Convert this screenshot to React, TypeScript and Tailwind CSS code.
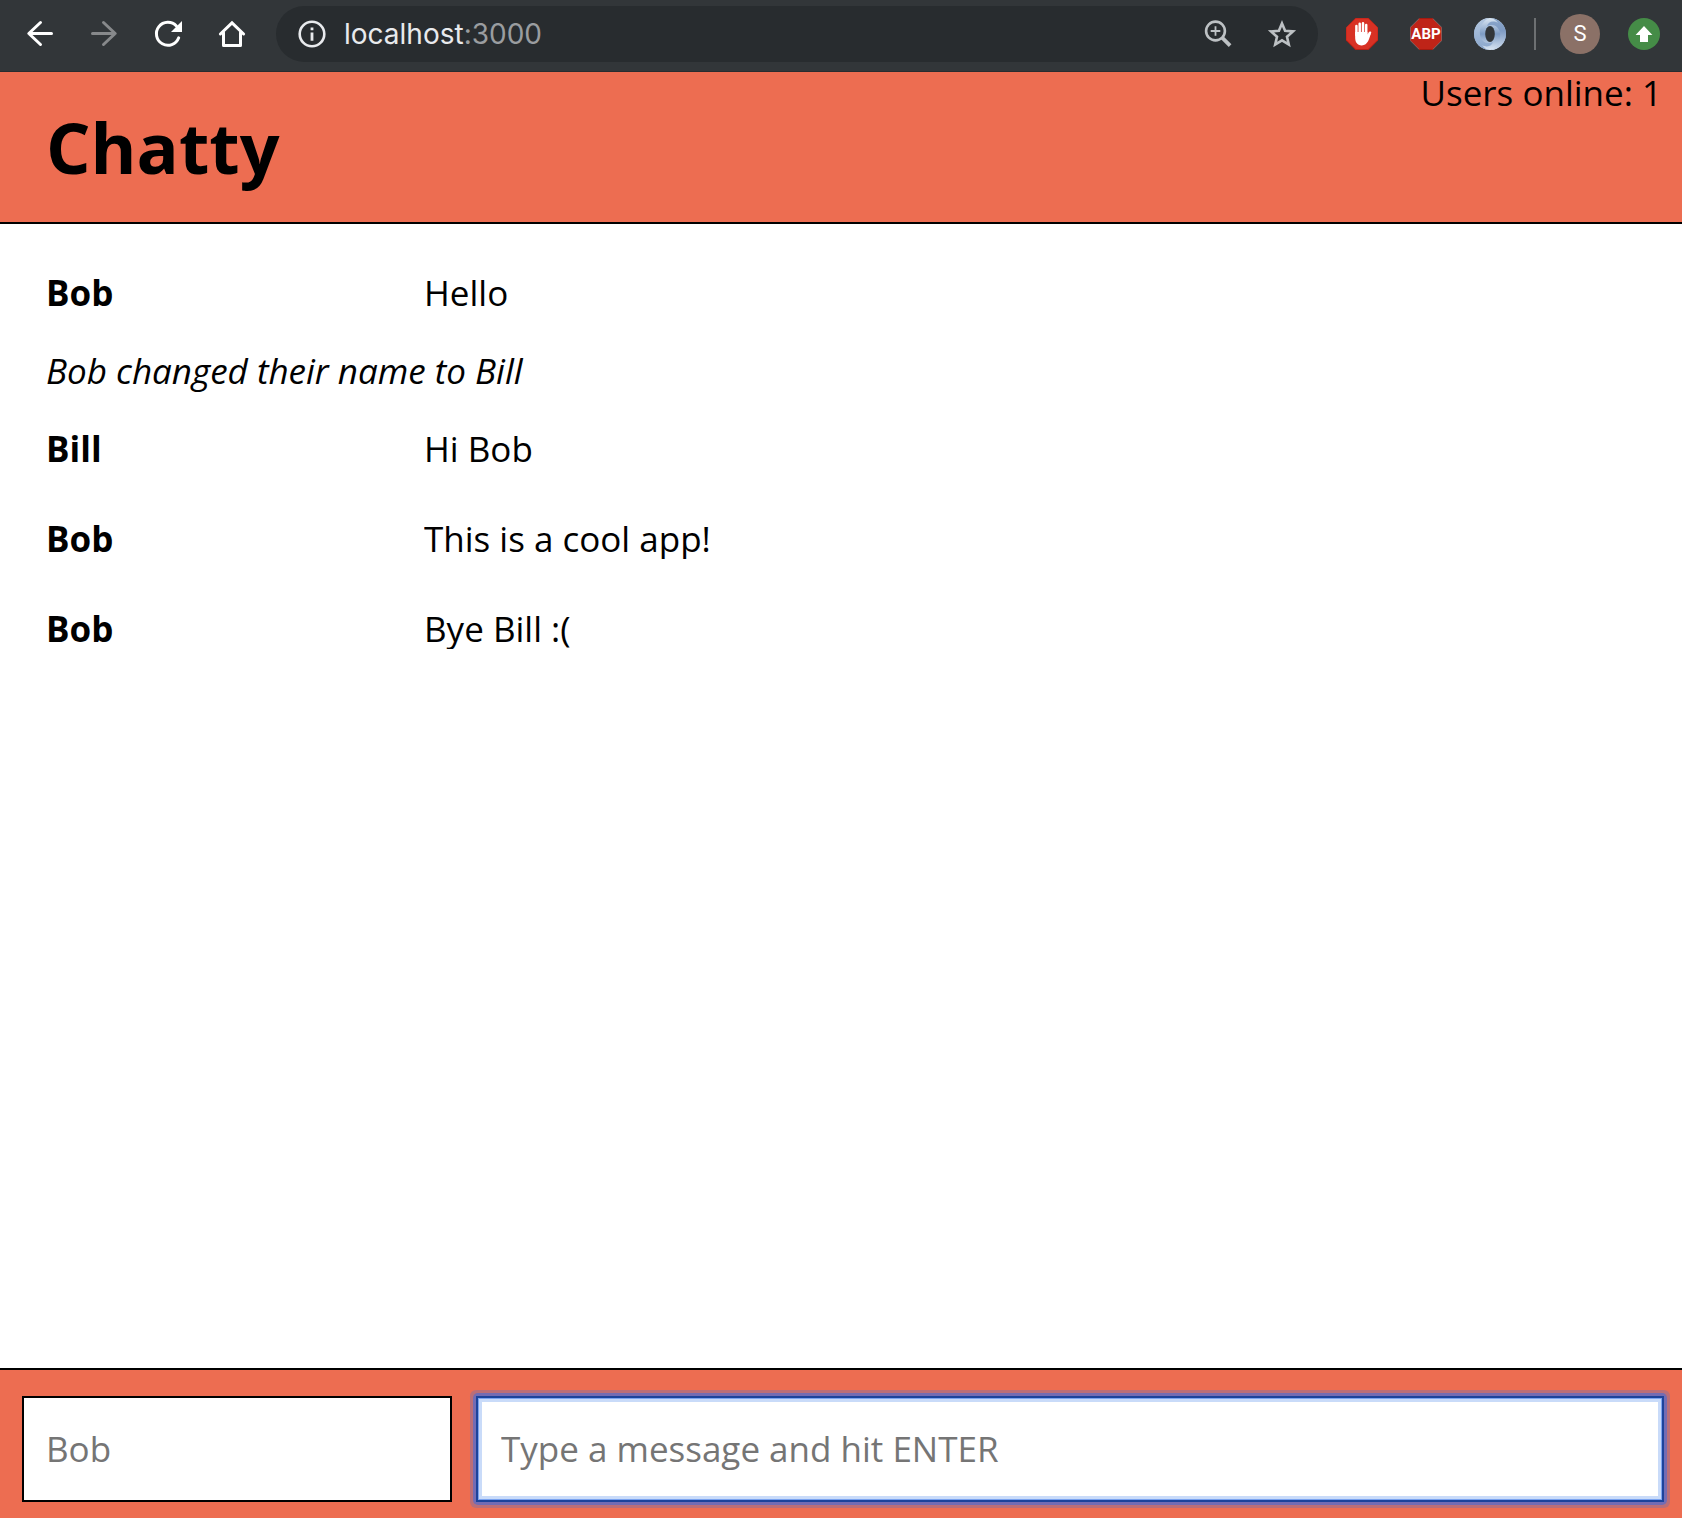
import React from "react";

type Entry =
  | { kind: "message"; user: string; text: string }
  | { kind: "notice"; text: string };

const entries: Entry[] = [
  { kind: "message", user: "Bob", text: "Hello" },
  { kind: "notice", text: "Bob changed their name to Bill" },
  { kind: "message", user: "Bill", text: "Hi Bob" },
  { kind: "message", user: "Bob", text: "This is a cool app!" },
  { kind: "message", user: "Bob", text: "Bye Bill :(" },
];

function BackIcon({ className }: { className: string }) {
  return (
    <svg viewBox="0 0 32 32" className={className} fill="none" stroke="currentColor" strokeWidth="3" strokeLinecap="round" strokeLinejoin="round" aria-hidden="true">
      <path d="M27.5 15.5H5M16.5 4.5L4.8 15.5L16.5 26.5" />
    </svg>
  );
}

function ForwardIcon({ className }: { className: string }) {
  return (
    <svg viewBox="0 0 32 32" className={className} fill="none" stroke="currentColor" strokeWidth="3" strokeLinecap="round" strokeLinejoin="round" aria-hidden="true">
      <path d="M4.5 15.5H27M15.5 4.5L27.2 15.5L15.5 26.5" />
    </svg>
  );
}

function ReloadIcon() {
  return (
    <svg viewBox="0 0 32 32" className="size-8 text-white" aria-hidden="true">
      <path d="M26.7 19.8A11.5 11.5 0 1 1 24.4 8" fill="none" stroke="currentColor" strokeWidth="3" strokeLinecap="round" />
      <path d="M30 3V14H19Z" fill="currentColor" />
    </svg>
  );
}

function HomeIcon() {
  return (
    <svg viewBox="0 0 32 32" className="size-8 text-white" fill="none" stroke="currentColor" strokeWidth="3" strokeLinecap="round" aria-hidden="true">
      <path d="M4.4 16L16 4.8L27.6 16" />
      <path d="M7.5 14.5V27.4H24.5V14.5" strokeLinejoin="round" />
    </svg>
  );
}

function InfoIcon() {
  return (
    <svg viewBox="0 0 28 28" className="size-7 text-[#e8eaed]" aria-hidden="true">
      <circle cx="14" cy="14" r="12.3" fill="none" stroke="currentColor" strokeWidth="2.6" />
      <path d="M12.6 7.5h2.8v2.8h-2.8zM12.6 12.4h2.8v8.4h-2.8z" fill="currentColor" />
    </svg>
  );
}

function ZoomIcon() {
  return (
    <svg viewBox="0 0 32 32" className="size-8 text-[#bdc1c4]" fill="none" stroke="currentColor" aria-hidden="true">
      <circle cx="13.5" cy="13" r="9.4" strokeWidth="2.6" />
      <path d="M13.5 8.2v9.6M8.7 13h9.6" strokeWidth="1.8" />
      <path d="M20.1 19.6l8 8" strokeWidth="3.8" />
    </svg>
  );
}

function StarIcon() {
  return (
    <svg viewBox="0 0 32 32" className="size-8 text-[#bdc1c4]" fill="none" stroke="currentColor" strokeWidth="2.6" aria-hidden="true">
      <path d="M16 5.4L19.1 12.8L27 13.4L21 18.7L22.8 26.6L16 22.4L9.2 26.6L11 18.7L5 13.4L12.9 12.8Z" />
    </svg>
  );
}

function HandStopIcon() {
  return (
    <svg viewBox="0 0 32 32" className="size-8" aria-hidden="true">
      <path d="M9.4 0H22.6L32 9.4V22.6L22.6 32H9.4L0 22.6V9.4Z" fill="#b81f14" />
      <path d="M9.8 .4H22.2L31.6 9.6V21.8L22.2 31H9.8L.4 21.8V9.6Z" fill="#d83124" />
      <g stroke="#fff" strokeWidth="2.5" strokeLinecap="round" fill="none">
        <path d="M10.4 8V17M13.7 5.7V16M17 5.2V16M20.2 7V17M24 14.7L21 20" />
      </g>
      <path d="M9.15 14H21.4V18L24.8 15.6C23.4 20.4 22 27.4 15.8 27.4C11 27.4 9.15 23.6 9.15 19.4Z" fill="#fff" />
    </svg>
  );
}

function AbpIcon() {
  return (
    <span className="relative grid size-8 place-items-center">
      <svg viewBox="0 0 32 32" className="absolute inset-0 size-8" aria-hidden="true">
        <path d="M9.4 .3H22.6L31.7 9.4V22.6L22.6 31.7H9.4L.3 22.6V9.4Z" fill="#bf2418" stroke="#8c8c8c" strokeWidth=".6" />
        <path d="M9.6 0H22.4L23.4 1H8.6ZM9.6 32H22.4L23.4 31H8.6Z" fill="#a31a10" />
      </svg>
      <span className="relative font-[Roboto,sans-serif] text-[15px] leading-4 font-bold text-white">ABP</span>
    </span>
  );
}

function RingIcon() {
  return (
    <svg viewBox="0 0 32 32" className="size-8" aria-hidden="true">
      <defs>
        <linearGradient id="ringBase" x1="0" y1="0" x2="0" y2="1">
          <stop offset="0" stopColor="#dbe7f3" />
          <stop offset=".5" stopColor="#7d9bc3" />
          <stop offset="1" stopColor="#dce8f4" />
        </linearGradient>
        <linearGradient id="ringRight" x1="0" y1="0" x2="0" y2="1">
          <stop offset="0" stopColor="#8ba7cb" />
          <stop offset=".4" stopColor="#7f9bc3" />
          <stop offset="1" stopColor="#cfdeee" />
        </linearGradient>
        <linearGradient id="ringLeft" x1="0" y1="0" x2="0" y2="1">
          <stop offset="0" stopColor="#b4c8e0" />
          <stop offset=".6" stopColor="#9bb4d4" />
          <stop offset="1" stopColor="#8ba7cc" />
        </linearGradient>
      </defs>
      <circle cx="16" cy="16" r="16" fill="url(#ringBase)" />
      <path d="M16 0C25 0 32 7 32 16C32 25 25 32 17 32C24 28 27 22 26 15C25 9 20 5 13 8C14 4 19 2 24 5C22 2 19 0 16 0Z" fill="url(#ringRight)" />
      <path d="M16 32C7 32 0 25 0 16C0 7 7 0 15 0C8 4 5 10 6 17C7 23 12 27 19 24C18 28 13 30 8 27C10 30 13 32 16 32Z" fill="url(#ringLeft)" />
      <ellipse cx="16" cy="16" rx="4.8" ry="8" fill="#323639" />
    </svg>
  );
}

function UpdateIcon() {
  return (
    <svg viewBox="0 0 32 32" className="size-8" aria-hidden="true">
      <circle cx="16" cy="16" r="16" fill="#458c47" />
      <path d="M16 8L24.4 17H20V24H12V17H7.6Z" fill="#fff" />
    </svg>
  );
}

function BrowserBar() {
  return (
    <div className="flex h-[72px] items-center border-b border-[#292c2f] bg-[#323639] pt-px pr-[22px] pb-1 pl-6">
      <nav aria-label="Browser" className="flex gap-8">
        <button type="button" aria-label="Back"><BackIcon className="size-8 text-white" /></button>
        <button type="button" aria-label="Forward"><ForwardIcon className="size-8 text-[#87898b]" /></button>
        <button type="button" aria-label="Reload"><ReloadIcon /></button>
        <button type="button" aria-label="Home"><HomeIcon /></button>
      </nav>
      <div className="ml-7 flex h-14 flex-1 items-center rounded-full bg-[#282c2f] pr-5 pl-[22px]">
        <button type="button" aria-label="Site information"><InfoIcon /></button>
        <a href="#" className="ml-[18px] flex-1 font-[Inter,sans-serif] text-[28px] leading-9 text-[#e8eaed]">
          localhost<span className="text-[#9a9da0]">:3000</span>
        </a>
        <div className="flex gap-8">
          <button type="button" aria-label="Zoom"><ZoomIcon /></button>
          <button type="button" aria-label="Bookmark"><StarIcon /></button>
        </div>
      </div>
      <div className="ml-7 flex items-center">
        <div className="flex gap-8">
          <button type="button" aria-label="AdBlock"><HandStopIcon /></button>
          <button type="button" aria-label="Adblock Plus"><AbpIcon /></button>
          <button type="button" aria-label="JSON viewer"><RingIcon /></button>
        </div>
        <span className="ml-7 h-8 w-0.5 bg-[#6d7072]" />
        <button type="button" aria-label="Profile" className="ml-6 grid size-10 place-items-center rounded-full bg-[#8b7167] font-[Roboto,sans-serif] text-[22px] text-white">
          S
        </button>
        <button type="button" aria-label="Update" className="ml-7"><UpdateIcon /></button>
      </div>
    </div>
  );
}

export default function App() {
  return (
    <div className="flex min-h-screen flex-col bg-white font-['Open_Sans',sans-serif] text-[35px] leading-10 text-black">
      <BrowserBar />
      <header className="flex items-start justify-between border-b-2 border-black bg-[#ed6d51] pr-5 pl-[46px]">
        <h1 className="py-[35px] text-[70px] leading-[80px] font-bold">Chatty</h1>
        <p className="pt-px">Users online: 1</p>
      </header>
      <main className="flex flex-1 flex-col gap-[50px] px-[46px] pt-[49px]">
        {entries.map((entry, i) =>
          entry.kind === "message" ? (
            <div key={i} className="grid grid-cols-[378px_1fr]">
              <span className="font-bold">{entry.user}</span>
              <span className="overflow-hidden">{entry.text}</span>
            </div>
          ) : (
            <p key={i} className="-my-3 italic">{entry.text}</p>
          )
        )}
      </main>
      <footer className="flex gap-6 border-t-2 border-black bg-[#ed6d51] pt-[26px] pr-[18px] pb-4 pl-[22px]">
        <input
          aria-label="Your name"
          placeholder="Bob"
          className="h-[106px] w-[430px] border-2 border-black bg-white px-[22px] pb-0.5 outline-none placeholder:text-[#757575]"
        />
        <div className="flex-1 rounded-[2px] shadow-[0_0_0_3px_#736cb3,0_0_0_6px_#bb6e77]">
          <input
            aria-label="Message"
            placeholder="Type a message and hit ENTER"
            className="h-[106px] w-full border-2 border-[#1c439b] bg-white px-[23px] pb-0.5 shadow-[inset_0_0_0_1px_#7ba4f0,inset_0_0_0_4px_#c9dbf9] outline-none placeholder:text-[#757575]"
          />
        </div>
      </footer>
    </div>
  );
}
